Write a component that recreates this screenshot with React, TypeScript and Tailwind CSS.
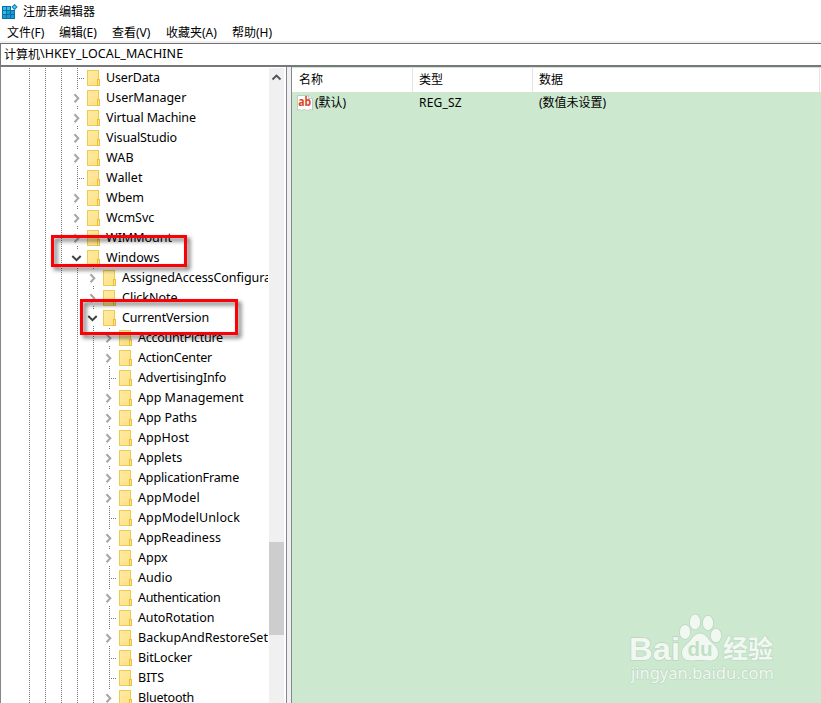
import React from "react";

type NodeState = "leaf" | "closed" | "open";

interface TreeItem {
  name: string;
  level: number;
  state: NodeState;
  tracking?: string;
}

const TREE: TreeItem[] = [
  { name: "UserData", level: 0, state: "leaf", tracking: "tracking-[-0.15px]" },
  { name: "UserManager", level: 0, state: "closed" },
  { name: "Virtual Machine", level: 0, state: "closed", tracking: "tracking-[-0.12px]" },
  { name: "VisualStudio", level: 0, state: "closed", tracking: "tracking-[-0.1px]" },
  { name: "WAB", level: 0, state: "closed", tracking: "tracking-[0.2px]" },
  { name: "Wallet", level: 0, state: "leaf" },
  { name: "Wbem", level: 0, state: "closed" },
  { name: "WcmSvc", level: 0, state: "closed" },
  { name: "WIMMount", level: 0, state: "closed" },
  { name: "Windows", level: 0, state: "open" },
  { name: "AssignedAccessConfiguration", level: 1, state: "closed", tracking: "tracking-[-0.06px]" },
  { name: "ClickNote", level: 1, state: "closed" },
  { name: "CurrentVersion", level: 1, state: "open", tracking: "tracking-[-0.14px]" },
  { name: "AccountPicture", level: 2, state: "closed", tracking: "tracking-[-0.26px]" },
  { name: "ActionCenter", level: 2, state: "closed", tracking: "tracking-[-0.2px]" },
  { name: "AdvertisingInfo", level: 2, state: "leaf", tracking: "tracking-[-0.15px]" },
  { name: "App Management", level: 2, state: "closed" },
  { name: "App Paths", level: 2, state: "closed", tracking: "tracking-[-0.05px]" },
  { name: "AppHost", level: 2, state: "closed", tracking: "tracking-[0.06px]" },
  { name: "Applets", level: 2, state: "closed" },
  { name: "ApplicationFrame", level: 2, state: "closed", tracking: "tracking-[-0.12px]" },
  { name: "AppModel", level: 2, state: "closed", tracking: "tracking-[0.22px]" },
  { name: "AppModelUnlock", level: 2, state: "leaf", tracking: "tracking-[0.1px]" },
  { name: "AppReadiness", level: 2, state: "closed" },
  { name: "Appx", level: 2, state: "closed" },
  { name: "Audio", level: 2, state: "leaf" },
  { name: "Authentication", level: 2, state: "closed", tracking: "tracking-[-0.3px]" },
  { name: "AutoRotation", level: 2, state: "leaf", tracking: "tracking-[-0.12px]" },
  { name: "BackupAndRestoreSettings", level: 2, state: "closed" },
  { name: "BitLocker", level: 2, state: "leaf", tracking: "tracking-[-0.1px]" },
  { name: "BITS", level: 2, state: "leaf" },
  { name: "Bluetooth", level: 2, state: "closed", tracking: "tracking-[-0.22px]" },
];

const MENU = [
  { label: "文件(F)", width: "w-[52px]" },
  { label: "编辑(E)", width: "w-[53px]" },
  { label: "查看(V)", width: "w-[54px]" },
  { label: "收藏夹(A)", width: "w-[66px]" },
  { label: "帮助(H)", width: "w-[52px]" },
];

const V_DOTS = "bg-[repeating-linear-gradient(to_bottom,#777_0_1px,transparent_1px_2px)]";
const H_DOTS = "bg-[repeating-linear-gradient(to_right,#777_0_1px,transparent_1px_2px)]";

function RegeditIcon() {
  return (
    <svg width="16" height="16" viewBox="0 0 16 16" className="shrink-0">
      <path d="M0 2h9v4h4v9H0z" fill="#0b70a6" />
      <path d="M1 3h3v3H1zM5 3h3v3H5zM1 7h3v3H1z" fill="#35bdea" />
      <path d="M5 7h3v3H5zM9 7h3v3H9zM1 11h3v3H1zM5 11h3v3H5zM9 11h3v3H9z" fill="#179bd1" />
      <path d="M12.5 -0.2 15.7 3 12.5 6.200 9.300 3z" fill="#1a86b8" />
      <path d="M12.5 1.400 14.100 3 12.500 4.600 10.900 3z" fill="#5ad0f1" />
    </svg>
  );
}

function FolderIcon() {
  return (
    <svg width="13" height="16" viewBox="0 0 13 16" className="ml-[2px] shrink-0">
      <defs>
        <linearGradient id="folder" x1="0" y1="0" x2="1" y2="1">
          <stop offset="0" stopColor="#ffeba6" />
          <stop offset="1" stopColor="#ffe183" />
        </linearGradient>
      </defs>
      <rect x="0.5" y="0.5" width="11" height="15" fill="url(#folder)" stroke="#efcb51" />
      <rect x="10.5" y="9.5" width="2" height="6" fill="#ffe594" stroke="#e8c03f" />
    </svg>
  );
}

function StringValueIcon() {
  return (
    <svg width="16" height="16" viewBox="0 0 16 16" className="shrink-0">
      <path d="M0.5 0.5h11l4 3v12l-2-1-3 1-3-1-3 1-2-1-2 1z" fill="#fff" stroke="#c3c8c3" />
      <path d="M11.5 0.5v3h4" fill="#eee" stroke="#c3c8c3" />
      <text x="1.2" y="11" fontSize="12" fontWeight="bold" fontFamily="Open Sans, sans-serif" fill="#d8431f" textLength="13" lengthAdjust="spacingAndGlyphs">
        ab
      </text>
    </svg>
  );
}

function Toggle({ state }: { state: NodeState }) {
  if (state === "leaf") {
    return (
      <div className="flex h-5 w-4 shrink-0 items-center pl-2">
        <div className={`h-5 w-px ${V_DOTS}`} />
        <div className={`ml-px h-px w-[6px] ${H_DOTS}`} />
      </div>
    );
  }
  return (
    <div className="flex h-5 w-4 shrink-0 flex-col items-center justify-between">
      <div className={`ml-px h-[2px] w-px ${V_DOTS}`} />
      <svg width="16" height="14" viewBox="0 0 16 14" fill="none">
        {state === "open" ? (
          <path d="M3.3 5 7.5 9.2 11.7 5" stroke="#404040" strokeWidth="2" />
        ) : (
          <path d="M5.5 3.2 9.3 7.2 5.5 11.2" stroke="#a6a6a6" strokeWidth="2" />
        )}
      </svg>
      <div className={`ml-px h-[2px] w-px ${V_DOTS}`} />
    </div>
  );
}

function TreeRow({ item }: { item: TreeItem }) {
  return (
    <div className="flex h-5 items-center whitespace-nowrap pl-5">
      {Array.from({ length: 3 + item.level }, (_, i) => (
        <div key={i} className="h-5 w-4 shrink-0 pl-2">
          <div className={`h-5 w-px ${V_DOTS}`} />
        </div>
      ))}
      <Toggle state={item.state} />
      <FolderIcon />
      <span
        className={`ml-[6px] font-['Noto_Sans','Noto_Sans_CJK_SC',sans-serif] text-[12.5px] leading-5 ${item.tracking ?? ""}`}
      >
        {item.name}
      </span>
    </div>
  );
}

function Watermark() {
  return (
    <svg width="150" height="74" viewBox="0 0 150 74" className="absolute left-[627px] top-[612px]">
      <g fill="#f1f8f2" stroke="#b9d6bf" strokeWidth="1.4" paintOrder="stroke">
        <text x="2" y="47.5" fontSize="32" fontWeight="bold" fontFamily="Liberation Sans, sans-serif" textLength="51" lengthAdjust="spacingAndGlyphs">
          Bai
        </text>
        <ellipse cx="58" cy="20" rx="5.2" ry="7" />
        <ellipse cx="68" cy="10" rx="5.2" ry="7.5" />
        <ellipse cx="81" cy="11" rx="5.2" ry="7.2" />
        <ellipse cx="89" cy="23.5" rx="5.2" ry="6.8" />
        <path d="M73 21.500c5 0 7 4 10 7.500c4 4 8 6.500 8 12c0 5-3 7.500-8 7.500c-4 0-6-0.500-10-0.500s-6 0.500-10 0.500c-5 0-8-3-8-7.500c0-5.500 4-7.500 8-12c3-3.500 5-7.500 10-7.500z" />
      </g>
      <text x="60.500" y="44" fontSize="20" fontWeight="bold" fontFamily="Liberation Sans, sans-serif" fill="#c0dfc5" textLength="25" lengthAdjust="spacingAndGlyphs">
        du
      </text>
      <g fill="#f1f8f2" stroke="#b9d6bf" strokeWidth="1.200" paintOrder="stroke">
        <text x="96" y="45.500" fontSize="25" fontWeight="bold" fontFamily="Noto Sans CJK SC, sans-serif" textLength="50" lengthAdjust="spacingAndGlyphs">
          经验
        </text>
        <text x="4" y="67" fontSize="16.500" fontFamily="Noto Sans, sans-serif" textLength="143" lengthAdjust="spacingAndGlyphs">
          jingyan.baidu.com
        </text>
      </g>
    </svg>
  );
}

export default function App() {
  return (
    <div className="relative flex h-[703px] w-[821px] flex-col overflow-hidden bg-white font-['Noto_Sans','Noto_Sans_CJK_SC',sans-serif] text-[12px] text-black">
      {/* Title bar */}
      <div className="flex h-[23px] shrink-0 items-center gap-[5px] pl-[2px]">
        <RegeditIcon />
        <span>注册表编辑器</span>
      </div>

      {/* Menu */}
      <div className="flex h-[18px] shrink-0 items-center whitespace-nowrap pl-[7px] pt-[2px]">
        {MENU.map((m) => (
          <span key={m.label} className={`shrink-0 ${m.width}`}>
            {m.label}
          </span>
        ))}
      </div>
      <div className="h-[2px] shrink-0 bg-[#f0f0f0]" />

      {/* Address bar */}
      <div className="flex h-[24px] shrink-0 items-center border-t border-b-2 border-l border-t-[#6f6f74] border-b-[#77777c] border-l-[#77777c] pl-[3px]">
        <span>计算机</span>
        <span className="text-[12.500px] tracking-[0.05px]">\HKEY_LOCAL_MACHINE</span>
      </div>

      <div className="flex min-h-0 flex-1">
        {/* Key tree */}
        <div className="flex w-[287px] shrink-0 border-x border-[#828790]">
          <div className="w-[267px] shrink-0 overflow-hidden pt-px">
            {TREE.map((item) => (
              <TreeRow key={item.name} item={item} />
            ))}
          </div>
          <div className="ml-px mt-px w-[15px] shrink-0 bg-[#f0f0f0]">
            <svg width="15" height="18" viewBox="0 0 15 18" fill="none">
              <path d="M3.500 11.500 7.500 7.500 11.500 11.500" stroke="#505050" strokeWidth="1.800" />
            </svg>
            <div className="mt-[456px] h-[93px] bg-[#cdcdcd]" />
          </div>
        </div>

        <div className="w-1 shrink-0 bg-[#f0f0f0]" />

        {/* Value list */}
        <div className="flex-1 border-l border-[#828790] bg-[#cce8cf] pt-px">
          <div className="flex h-6 items-center bg-white">
            <div className="flex h-full w-[121px] items-center border-r border-[#e5e5e5] pl-[7px]">名称</div>
            <div className="flex h-full w-[120px] items-center border-r border-[#e5e5e5] pl-[6px]">类型</div>
            <div className="flex h-full w-[287px] items-center border-r border-[#e5e5e5] pl-[6px]">数据</div>
          </div>
          <div className="flex h-[21px] items-center">
            <div className="flex w-[121px] items-center gap-[2px] pl-[5px]">
              <StringValueIcon />
              <span>(默认)</span>
            </div>
            <div className="w-[120px] pl-[6px] tracking-[0.2px]">REG_SZ</div>
            <div className="pl-[6px]">(数值未设置)</div>
          </div>
        </div>
      </div>

      {/* Highlighted keys */}
      <div className="absolute left-[51px] top-[235px] h-[32px] w-[136px] border-3 border-[#fb0007] drop-shadow-[3px_3px_2px_rgba(0,0,0,0.6)]" />
      <div className="absolute left-[80px] top-[299px] h-[36px] w-[158px] border-3 border-[#fb0007] drop-shadow-[3px_3px_2px_rgba(0,0,0,0.6)]" />

      <Watermark />
    </div>
  );
}
